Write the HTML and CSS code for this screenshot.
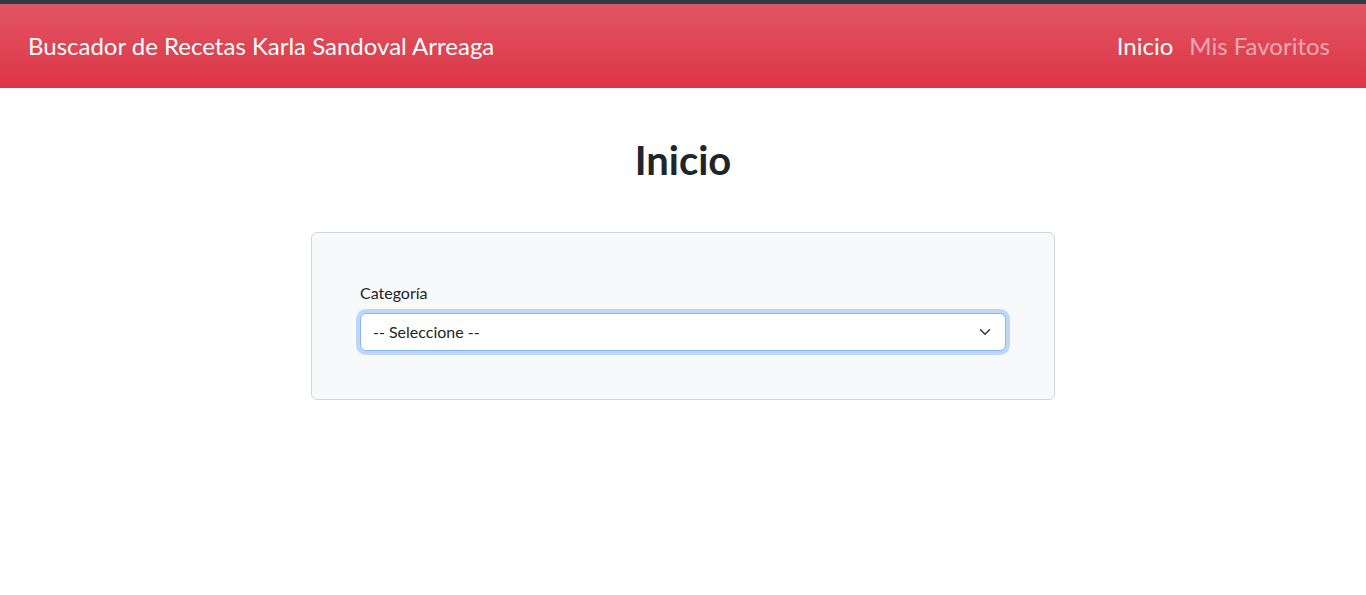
FILE: index.html
```html
<!DOCTYPE html>
<html lang="es">
<head>
<meta charset="utf-8">
<title>Buscador de Recetas</title>
<link rel="stylesheet" href="styles.css">
</head>
<body>
<div class="topline"></div>
<header class="navbar">
  <a class="brand" href="#">Buscador de Recetas Karla Sandoval Arreaga</a>
  <nav class="nav">
    <a class="nav-link active" href="#">Inicio</a>
    <a class="nav-link" href="#">Mis Favoritos</a>
  </nav>
</header>
<main class="main">
  <h1 class="title">Inicio</h1>
  <form class="card">
    <label class="label" for="cat">Categoría</label>
    <div class="select" id="cat">
      <span class="select-text">-- Seleccione --</span>
      <svg class="chevron" width="16" height="12" viewBox="0 0 16 16" aria-hidden="true"><path d="m2 5 6 6 6-6" fill="none" stroke="#343a40" stroke-width="2" stroke-linecap="round" stroke-linejoin="round"/></svg>
    </div>
  </form>
</main>
</body>
</html>
```
FILE: styles.css
```css
* { box-sizing: border-box; }
body {
  margin: 0;
  font-family: Lato, "Open Sans", sans-serif;
  color: #212529;
  background: #fff;
}
.topline { height: 4px; background: #313c47; }
.navbar {
  height: 84px;
  display: flex;
  align-items: center;
  justify-content: space-between;
  padding: 0 28px;
  background: linear-gradient(180deg, #e25563 0%, #dc3545 100%);
}
.brand {
  color: #fff;
  text-decoration: none;
  font-size: 24px;
  line-height: 36px;
}
.nav { display: flex; }
.nav-link {
  color: rgba(255, 255, 255, 0.55);
  text-decoration: none;
  font-size: 24px;
  line-height: 36px;
  padding: 0 8px;
}
.nav-link.active { color: #fff; }
.main { display: flex; flex-direction: column; align-items: center; }
.title {
  margin: 48px 0;
  font-size: 40px;
  line-height: 48px;
  font-weight: 700;
  color: #212529;
}
.card {
  width: 744px;
  padding: 48px;
  background: #f8f9fa;
  border: 1px solid #d3d6da;
  border-radius: 6px;
  display: flex;
  flex-direction: column;
}
.label {
  font-size: 16px;
  line-height: 24px;
  margin-bottom: 8px;
}
.select {
  height: 38px;
  display: flex;
  align-items: center;
  justify-content: space-between;
  padding: 0 12px;
  background: #fff;
  border: 1px solid #86b7fe;
  border-radius: 6px;
  box-shadow: 0 0 0 4px rgba(13, 110, 253, 0.25);
  font-size: 16px;
  line-height: 24px;
}
.chevron { display: block; }
```
